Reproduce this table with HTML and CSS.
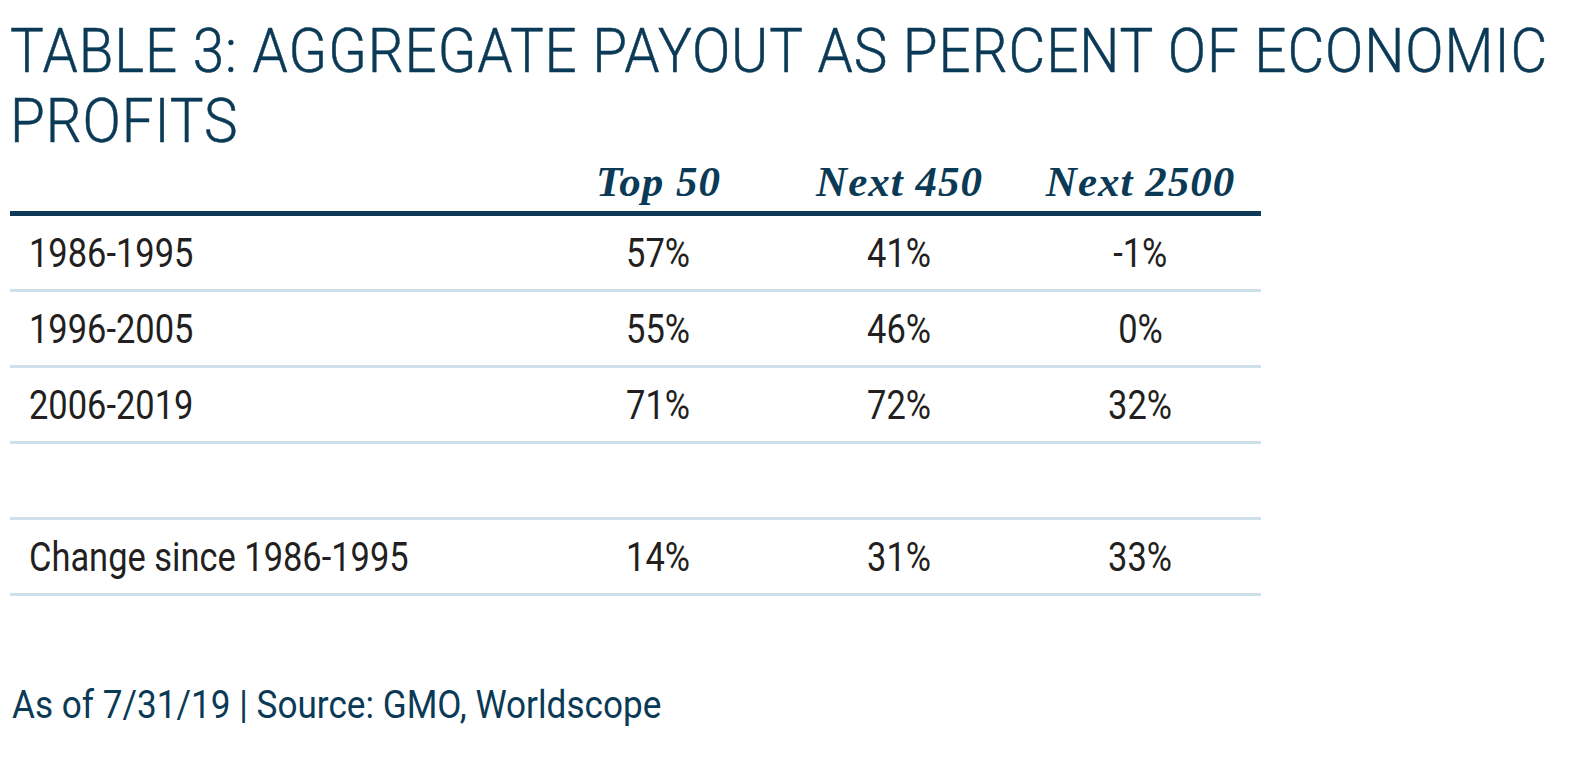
FILE: index.html
```html
<!DOCTYPE html>
<html>
<head>
<meta charset="utf-8">
<link rel="stylesheet" href="styles.css">
</head>
<body>
<div class="page">
  <h1 class="title"><span class="squeeze">TABLE 3: AGGREGATE PAYOUT AS PERCENT OF ECONOMIC<br>PROFITS</span></h1>
  <div class="table">
    <div class="row head">
      <div class="cell label"></div>
      <div class="cell num hd">Top 50</div>
      <div class="cell num hd">Next 450</div>
      <div class="cell num hd">Next 2500</div>
    </div>
    <div class="row">
      <div class="cell label"><span class="sq">1986-1995</span></div>
      <div class="cell num"><span class="sqc">57%</span></div>
      <div class="cell num"><span class="sqc">41%</span></div>
      <div class="cell num"><span class="sqc">-1%</span></div>
    </div>
    <div class="row">
      <div class="cell label"><span class="sq">1996-2005</span></div>
      <div class="cell num"><span class="sqc">55%</span></div>
      <div class="cell num"><span class="sqc">46%</span></div>
      <div class="cell num"><span class="sqc">0%</span></div>
    </div>
    <div class="row">
      <div class="cell label"><span class="sq">2006-2019</span></div>
      <div class="cell num"><span class="sqc">71%</span></div>
      <div class="cell num"><span class="sqc">72%</span></div>
      <div class="cell num"><span class="sqc">32%</span></div>
    </div>
    <div class="row blank">
      <div class="cell label"></div>
      <div class="cell num"></div>
      <div class="cell num"></div>
      <div class="cell num"></div>
    </div>
    <div class="row">
      <div class="cell label"><span class="sq">Change since 1986-1995</span></div>
      <div class="cell num"><span class="sqc">14%</span></div>
      <div class="cell num"><span class="sqc">31%</span></div>
      <div class="cell num"><span class="sqc">33%</span></div>
    </div>
  </div>
  <p class="source"><span class="sq">As of 7/31/19 | Source: GMO, Worldscope</span></p>
</div>
</body>
</html>
```

FILE: styles.css
```css
html, body {
  margin: 0;
  padding: 0;
  background: #ffffff;
  overflow: hidden;
}
.page {
  padding: 16px 0 0 10px;
  font-family: Roboto, "Liberation Sans", sans-serif;
}
.title {
  margin: 0;
  font-family: Roboto, "Liberation Sans", sans-serif;
  font-weight: 300;
  font-size: 62px;
  line-height: 70px;
  color: #0b3a56;
  white-space: nowrap;
  letter-spacing: 1px;
}
.squeeze {
  display: inline-block;
  width: 1540px;
  transform: scaleX(0.912);
  transform-origin: left top;
  -webkit-text-stroke: 0.5px #0b3a56;
}
.table {
  width: 1251px;
}
.row {
  display: grid;
  grid-template-columns: 528px 241px 241px 241px;
  height: 73px;
  align-items: center;
  border-bottom: 3px solid #cfe0ea;
}
.row.head {
  height: 55px;
  align-items: end;
  border-bottom: 5px solid #0e3a57;
}
.cell.label {
  padding-left: 19px;
  font-size: 41px;
  color: #231f20;
}
.cell.num {
  text-align: center;
  font-size: 41px;
  color: #231f20;
}
.cell.hd {
  font-family: "Liberation Serif", serif;
  font-weight: bold;
  font-style: italic;
  font-size: 43px;
  letter-spacing: 1px;
  color: #0b3a56;
  padding-bottom: 5px;
}
.sq {
  display: inline-block;
  transform: scaleX(0.84);
  transform-origin: left center;
}
.sqc {
  display: inline-block;
  transform: scaleX(0.84);
  transform-origin: center center;
}
.source {
  margin: 87px 0 0 2px;
  font-size: 38px;
  color: #0b3a56;
  white-space: nowrap;
}
.source .sq {
  transform: scaleX(0.925);
}
```
